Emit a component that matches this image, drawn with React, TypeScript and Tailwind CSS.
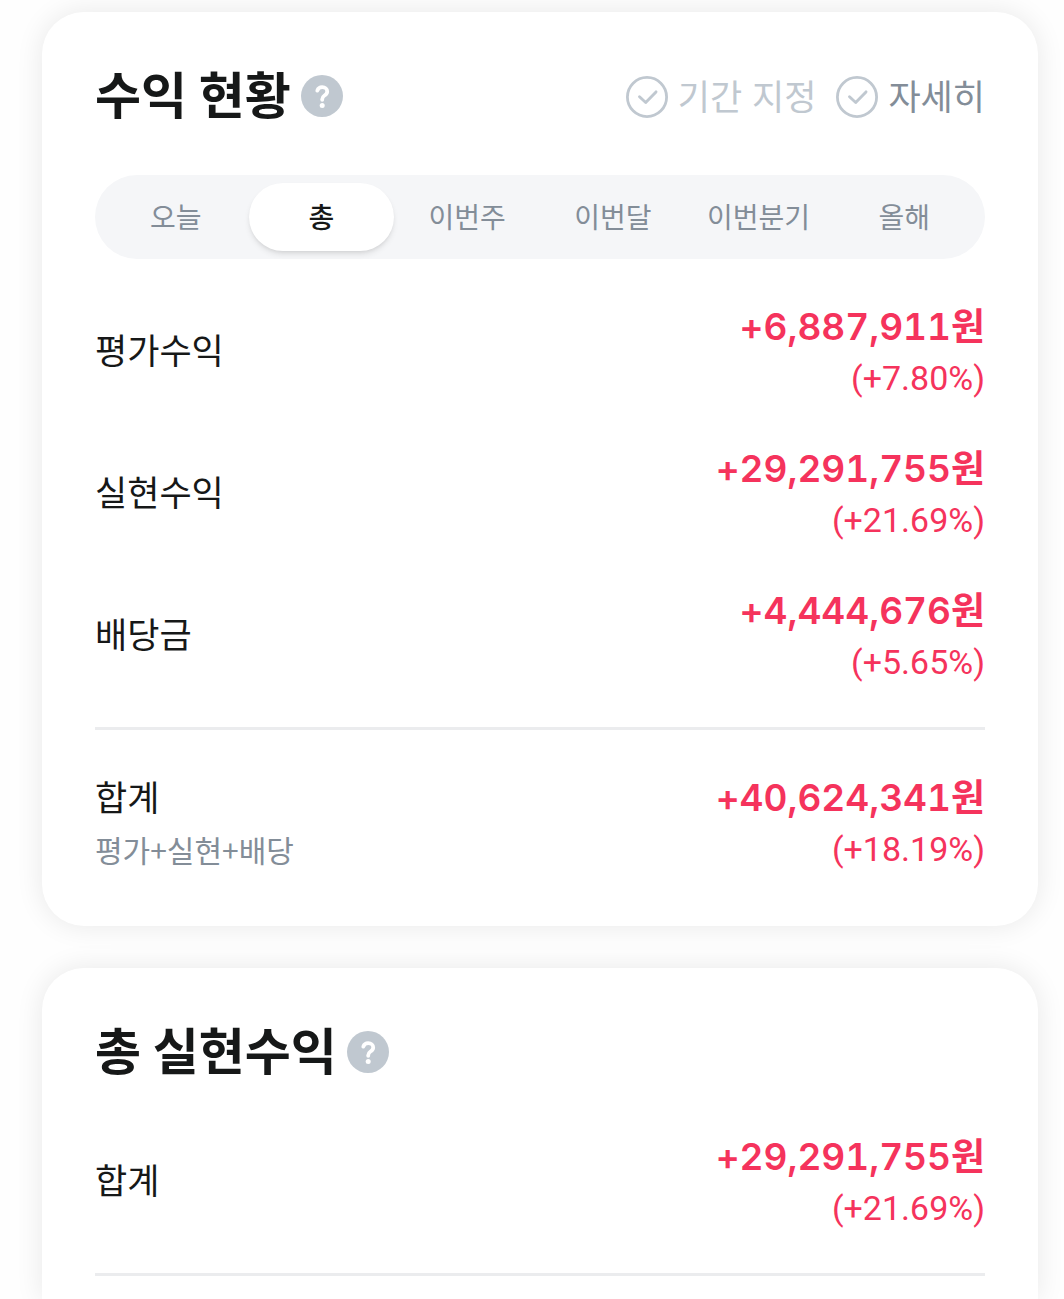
import { useState } from "react";

const tabs = ["오늘", "총", "이번주", "이번달", "이번분기", "올해"];

const profits = [
  { label: "평가수익", amount: "+6,887,911원", rate: "(+7.80%)" },
  { label: "실현수익", amount: "+29,291,755원", rate: "(+21.69%)" },
  { label: "배당금", amount: "+4,444,676원", rate: "(+5.65%)" },
];

function HelpButton() {
  return (
    <button type="button" aria-label="도움말" className="shrink-0">
      <svg viewBox="0 0 42 42" className="size-[42px]" fill="none">
        <circle cx="21" cy="21" r="21" fill="#c0c8d0" />
        <path
          d="M16.300 15.600c.8-2.200 2.500-3.400 4.900-3.400 2.900 0 5 1.700 5 4.200 0 1.900-1 3-2.700 4.100-1.600 1.100-2.300 1.900-2.300 3.700v.600"
          stroke="#fff"
          strokeWidth="3.800"
          strokeLinecap="round"
          strokeLinejoin="round"
        />
        <circle cx="21.200" cy="30.400" r="2.500" fill="#fff" />
      </svg>
    </button>
  );
}

function CheckIcon() {
  return (
    <svg viewBox="0 0 42 42" className="size-[42px]" fill="none" stroke="#c0c8d0">
      <circle cx="21" cy="21" r="19.600" strokeWidth="2.800" />
      <path d="M13.500 20.800l6.200 5.700 10.300-10.600" strokeWidth="2.900" strokeLinecap="round" strokeLinejoin="round" />
    </svg>
  );
}

function Money({ amount, rate }: { amount: string; rate: string }) {
  return (
    <div className="text-right text-[#f5335c] tabular-nums">
      <p className="text-[37px] leading-[52px] font-semibold">{amount}</p>
      <p className="font-['Roboto'] text-[34px] leading-[50px]">{rate}</p>
    </div>
  );
}

export default function App() {
  const [active, setActive] = useState("총");

  return (
    <div className="min-h-screen bg-[#fefefe] pt-3 pr-[26px] pl-[42px] font-['Inter','Noto_Sans_CJK_KR',sans-serif] text-[#161818]">
      <section className="rounded-[42px] bg-white px-[53px] pt-12 pb-[52px] shadow-[0_0_28px_rgba(0,0,0,0.09)]">
        <header className="flex items-center justify-between">
          <div className="flex items-center gap-2.5">
            <h2 className="text-[50px] leading-[72px] font-bold">수익 현황</h2>
            <HelpButton />
          </div>
          <div className="flex gap-5 pt-0.5 text-[35px]">
            <button type="button" className="flex items-center gap-2.5 text-[#c0c8d0]">
              <CheckIcon />
              기간 지정
            </button>
            <button type="button" className="flex items-center gap-2.5 text-[#838d98]">
              <CheckIcon />
              자세히
            </button>
          </div>
        </header>

        <div className="mt-[43px] grid grid-cols-6 rounded-full bg-[#f5f6f8] p-2">
          {tabs.map((tab) => (
            <button
              key={tab}
              type="button"
              onClick={() => setActive(tab)}
              className={
                active === tab
                  ? "h-[68px] rounded-full bg-white pt-0.5 text-[28px] font-medium shadow-md"
                  : "h-[68px] pt-0.5 text-[28px] text-[#838d98]"
              }
            >
              {tab}
            </button>
          ))}
        </div>

        <div className="mt-[42px] space-y-10">
          {profits.map((item) => (
            <div key={item.label} className="flex items-center justify-between">
              <p className="pb-0.5 text-[35px]">{item.label}</p>
              <Money amount={item.amount} rate={item.rate} />
            </div>
          ))}
        </div>

        <hr className="mt-10 mb-[42px] border-t-[3px] border-[#ebecee]" />

        <div className="flex justify-between">
          <div>
            <p className="text-[35px] leading-[52px]">합계</p>
            <p className="font-['Noto_Sans_CJK_KR'] text-[30px] leading-[50px] text-[#838d98]">
              평가+실현+배당
            </p>
          </div>
          <Money amount="+40,624,341원" rate="(+18.19%)" />
        </div>
      </section>

      <section className="mt-[42px] rounded-t-[42px] bg-white px-[53px] pt-12 shadow-[0_0_28px_rgba(0,0,0,0.09)]">
        <div className="flex items-center gap-2.5">
          <h2 className="text-[50px] leading-[72px] font-bold">총 실현수익</h2>
          <HelpButton />
        </div>
        <div className="mt-[43px] flex items-center justify-between">
          <p className="pb-0.5 text-[35px]">합계</p>
          <Money amount="+29,291,755원" rate="(+21.69%)" />
        </div>
        <hr className="mt-10 border-t-[3px] border-[#ebecee]" />
        <div className="h-6" />
      </section>
    </div>
  );
}
